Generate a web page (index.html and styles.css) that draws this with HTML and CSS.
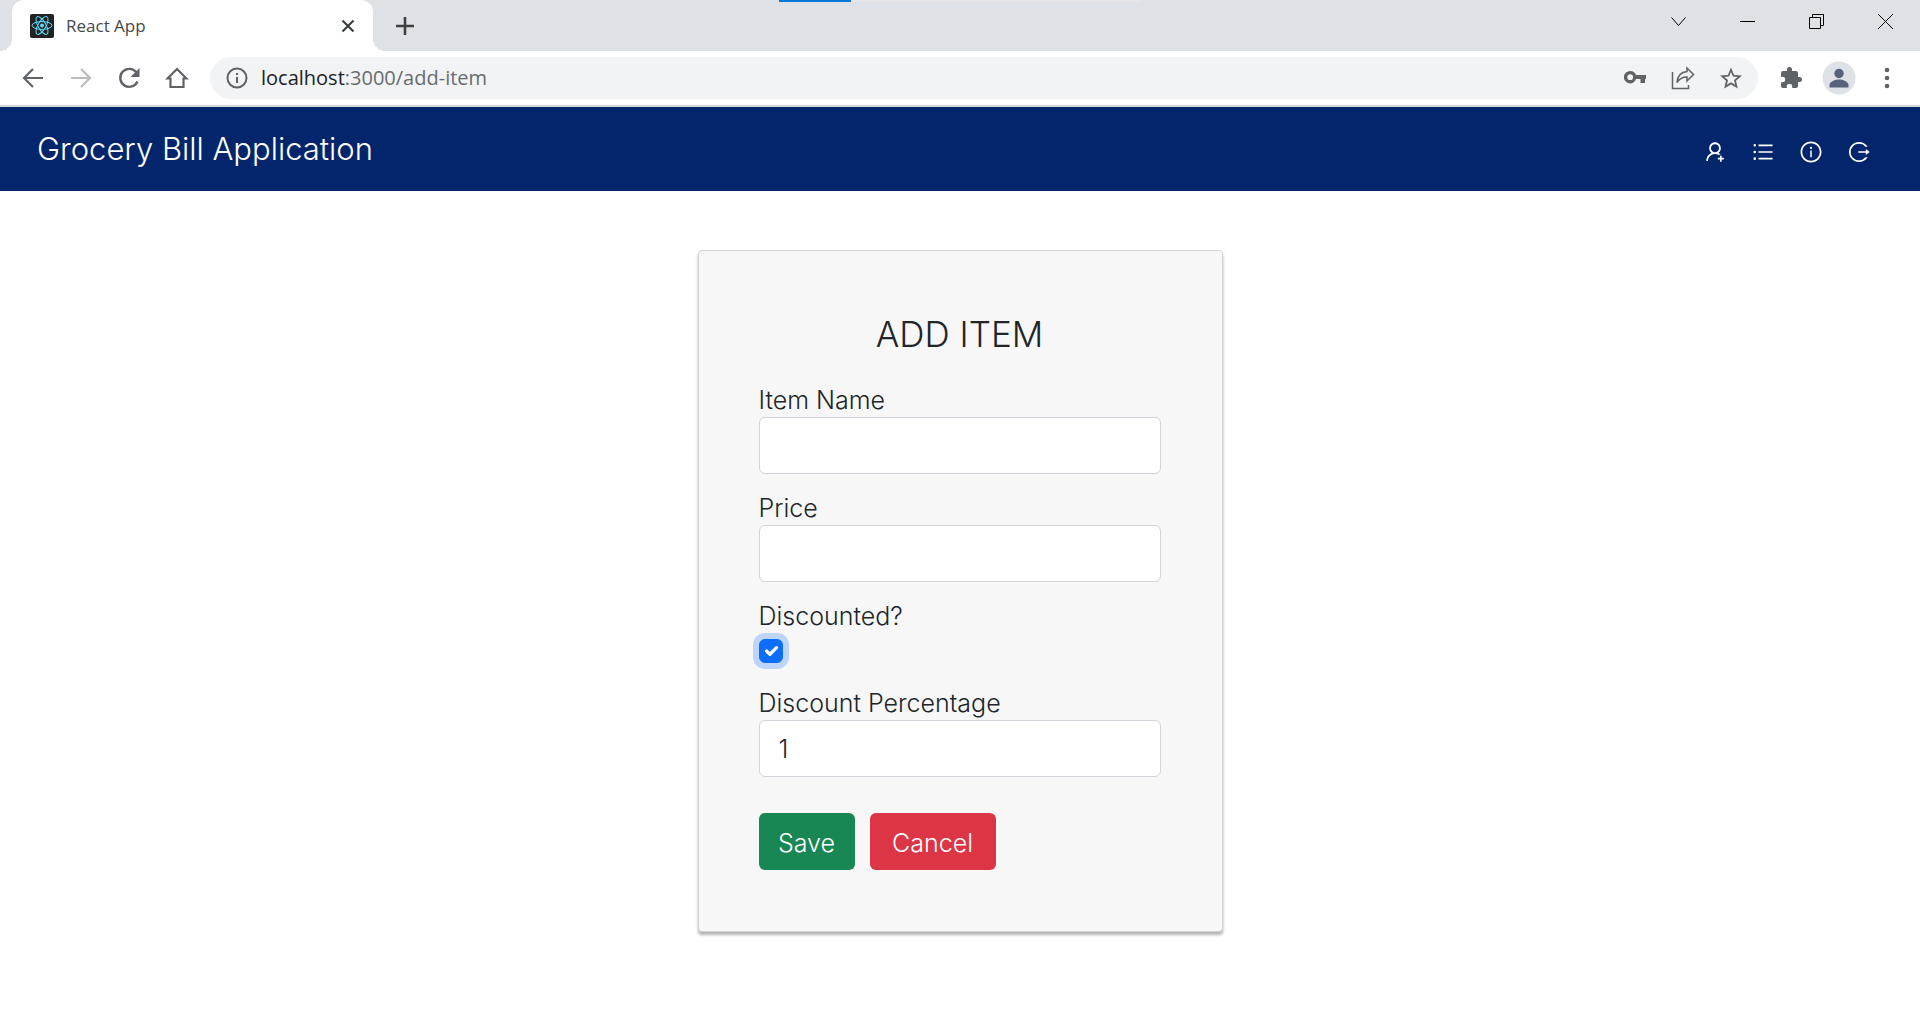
FILE: index.html
```html
<!DOCTYPE html>
<html lang="en">
<head>
<meta charset="utf-8">
<title>React App</title>
<meta name="viewport" content="width=device-width, initial-scale=1">
<link rel="stylesheet" href="styles.css">
</head>
<body>
<div class="browser">
  <div class="tabstrip">
    <div class="tab">
      <svg class="favicon" viewBox="0 0 24 24" aria-hidden="true">
        <rect width="24" height="24" rx="2" fill="#222"/>
        <g fill="none" stroke="#61dafb" stroke-width="1">
          <ellipse cx="12" cy="11.500" rx="10" ry="3.900"/>
          <ellipse cx="12" cy="11.500" rx="10" ry="3.900" transform="rotate(60 12 11.500)"/>
          <ellipse cx="12" cy="11.500" rx="10" ry="3.900" transform="rotate(120 12 11.500)"/>
        </g>
        <circle cx="12" cy="11.500" r="2" fill="#61dafb"/>
      </svg>
      <span class="tab-title">React App</span>
      <button class="tab-button" type="button" aria-label="Close tab">
        <svg width="24" height="24" viewBox="0 0 24 24"><path d="M6.500 6.500l11 11M17.500 6.500l-11 11" fill="none" stroke="#3c4043" stroke-width="2.200"/></svg>
      </button>
    </div>
    <button class="new-tab" type="button" aria-label="New tab">
      <svg width="24" height="24" viewBox="0 0 24 24"><path d="M12 3v18M3 12h18" fill="none" stroke="#3c4043" stroke-width="2.600"/></svg>
    </button>
    <div class="window-controls">
      <button type="button" aria-label="Search tabs"><svg width="17" height="17" viewBox="0 0 17 17"><path d="M1.500 4.500l7 8 7-8"/></svg></button>
      <button type="button" aria-label="Minimize"><svg width="17" height="17" viewBox="0 0 17 17"><path d="M1 8.500h15"/></svg></button>
      <button type="button" aria-label="Restore"><svg width="17" height="17" viewBox="0 0 17 17"><path d="M1.500 4.500h11v11h-11zM4.500 4.500v-3h11v11h-3"/></svg></button>
      <button type="button" aria-label="Close"><svg width="17" height="17" viewBox="0 0 17 17"><path d="M1 1l15 15M16 1L1 16"/></svg></button>
    </div>
    <div class="load-bar"><div class="load-bar-fill"></div></div>
  </div>

  <div class="toolbar">
    <button class="tool" type="button" aria-label="Back"><svg width="24" height="24" viewBox="0 0 24 24"><path d="M22 12H3M12 3l-9 9 9 9" fill="none" stroke="#5f6368" stroke-width="2.200"/></svg></button>
    <button class="tool" type="button" aria-label="Forward"><svg width="24" height="24" viewBox="0 0 24 24"><path d="M2 12h19M12 3l9 9-9 9" fill="none" stroke="#babcbe" stroke-width="2.200"/></svg></button>
    <button class="tool" type="button" aria-label="Reload"><svg width="24" height="24" viewBox="0 0 24 24"><path d="M20.500 15.500A9 9 0 1 1 19.300 6.200" fill="none" stroke="#5f6368" stroke-width="2.400"/><path d="M22.500 2v9h-9z" fill="#5f6368"/></svg></button>
    <button class="tool" type="button" aria-label="Home"><svg width="24" height="24" viewBox="0 0 24 24"><path d="M2.500 12.500L12 3l9.500 9.500H18.500V21h-13v-8.500z" fill="none" stroke="#5f6368" stroke-width="2.200"/></svg></button>
    <div class="omnibox">
      <button class="tool site-info" type="button" aria-label="Site information"><svg width="24" height="24" viewBox="0 0 24 24"><circle cx="12" cy="12" r="9.500" fill="none" stroke="#5f6368" stroke-width="2"/><path d="M11 11h2v6h-2zM11 7h2v2h-2z" fill="#5f6368"/></svg></button>
      <div class="url"><span class="url-host">localhost</span>:3000/add-item</div>
      <button class="tool" type="button" aria-label="Passwords"><svg width="24" height="24" viewBox="0 0 24 24"><path fill="#5f6368" fill-rule="evenodd" d="M7.200 5a6.200 6.200 0 0 1 5.800 4H23v4h-1v4h-4.500v-4H13A6.200 6.200 0 1 1 7.200 5zm0 3.300a2.900 2.900 0 1 0 0 5.800 2.900 2.900 0 0 0 0-5.800z"/></svg></button>
      <button class="tool" type="button" aria-label="Share"><svg width="24" height="24" viewBox="0 0 24 24"><path d="M1.500 6v16.500h16V19M16 2l6.500 6.500L16 15v-4c-4.500 0-7.500 1.500-10 5.500.5-6.500 4-10.500 10-11z" fill="none" stroke="#5f6368" stroke-width="1.500"/></svg></button>
      <button class="tool" type="button" aria-label="Bookmark"><svg width="24" height="24" viewBox="0 0 24 24"><path fill="#5f6368" d="M23 9.600l-7.900-.7L12 1.500 8.900 8.900 1 9.600l6 5.200L5.200 22.600 12 18.400l6.800 4.200-1.800-7.800zM12 16.300l-4.100 2.500L9 14.100l-3.700-3.200 4.800-.4L12 6l1.900 4.500 4.800.4-3.700 3.200 1.100 4.700z"/></svg></button>
    </div>
    <div class="toolbar-end">
      <button class="tool" type="button" aria-label="Extensions"><svg width="24" height="24" viewBox="0 0 24 24"><path fill="#5f6368" d="M20.500 11H19V7c0-1.100-.9-2-2-2h-4V3.500a2.500 2.500 0 0 0-5 0V5H4a2 2 0 0 0-2 2v3.800h1.500a2.700 2.700 0 0 1 0 5.400H2V20c0 1.100.9 2 2 2h3.800v-1.500a2.700 2.700 0 0 1 5.400 0V22H17a2 2 0 0 0 2-2v-4h1.500a2.500 2.500 0 0 0 0-5z"/></svg></button>
      <button class="tool" type="button" aria-label="Profile"><svg width="34" height="34" viewBox="0 0 34 34"><circle cx="17" cy="17" r="16.500" fill="#dee1e6"/><g fill="#56627a"><circle cx="17" cy="12.500" r="4.700"/><path d="M7.500 26.500v-2.500c0-3.500 6-5.500 9.500-5.500s9.500 2 9.500 5.500v2.500z"/></g></svg></button>
      <button class="tool" type="button" aria-label="Menu"><svg width="24" height="24" viewBox="0 0 24 24"><g fill="#5f6368"><circle cx="12" cy="4" r="2.300"/><circle cx="12" cy="12" r="2.300"/><circle cx="12" cy="20" r="2.300"/></g></svg></button>
    </div>
  </div>
</div>

<header class="app-header">
  <a class="brand" href="#">Grocery Bill Application</a>
  <nav class="app-nav">
    <a href="#" aria-label="Add customer"><svg width="24" height="24" viewBox="0 0 1024 1024"><path d="M678.300 642.400c24.200-13 51.900-20.400 81.400-20.400h.1c3 0 4.400-3.600 2.200-5.600a371.670 371.670 0 00-103.700-65.800c-.4-.2-.8-.3-1.200-.5C719.200 505 759.600 431.700 759.600 349c0-137-110.800-248-247.500-248S264.700 212 264.700 349c0 82.700 40.400 156 102.600 201.100-.4.2-.8.3-1.200.5-44.700 18.900-84.800 46-119.300 80.600a373.420 373.420 0 00-80.400 119.500A373.600 373.600 0 00137 888.800a8 8 0 008 8.200h59.900c4.300 0 7.900-3.500 8-7.800 2-77.200 32.900-149.500 87.600-204.300C357 628.200 432.200 597 512.200 597c56.700 0 111.100 15.700 158 45.100a8.100 8.100 0 008.100.3zM512.200 521c-45.800 0-88.900-17.900-121.400-50.400A171.200 171.200 0 01340.500 349c0-45.900 17.900-89.100 50.300-121.600S466.300 177 512.200 177s88.900 17.900 121.400 50.400A171.200 171.200 0 01683.900 349c0 45.900-17.900 89.100-50.300 121.600C601.100 503.100 558 521 512.200 521zM880 759h-84v-84c0-4.400-3.600-8-8-8h-56c-4.400 0-8 3.600-8 8v84h-84c-4.400 0-8 3.600-8 8v56c0 4.400 3.600 8 8 8h84v84c0 4.400 3.600 8 8 8h56c4.400 0 8-3.600 8-8v-84h84c4.400 0 8-3.600 8-8v-56c0-4.400-3.600-8-8-8z"/></svg></a>
    <a href="#" aria-label="Item list"><svg width="24" height="24" viewBox="0 0 1024 1024"><path d="M912 192H328c-4.400 0-8 3.600-8 8v56c0 4.400 3.600 8 8 8h584c4.400 0 8-3.600 8-8v-56c0-4.400-3.600-8-8-8zm0 284H328c-4.400 0-8 3.600-8 8v56c0 4.400 3.600 8 8 8h584c4.400 0 8-3.600 8-8v-56c0-4.400-3.600-8-8-8zm0 284H328c-4.400 0-8 3.600-8 8v56c0 4.400 3.600 8 8 8h584c4.400 0 8-3.600 8-8v-56c0-4.400-3.600-8-8-8zM104 228a56 56 0 10112 0 56 56 0 10-112 0zm0 284a56 56 0 10112 0 56 56 0 10-112 0zm0 284a56 56 0 10112 0 56 56 0 10-112 0z"/></svg></a>
    <a href="#" aria-label="About"><svg width="24" height="24" viewBox="0 0 1024 1024"><path d="M512 64C264.600 64 64 264.600 64 512s200.600 448 448 448 448-200.600 448-448S759.400 64 512 64zm0 820c-205.400 0-372-166.600-372-372s166.600-372 372-372 372 166.600 372 372-166.600 372-372 372z"/><path d="M464 336a48 48 0 1096 0 48 48 0 10-96 0zm72 112h-48c-4.400 0-8 3.600-8 8v272c0 4.400 3.600 8 8 8h48c4.400 0 8-3.600 8-8V456c0-4.400-3.600-8-8-8z"/></svg></a>
    <a href="#" aria-label="Log out"><svg width="24" height="24" viewBox="0 0 1024 1024"><path d="M868 732h-70.300c-4.800 0-9.300 2.100-12.300 5.800-7 8.500-14.500 16.700-22.400 24.500a353.840 353.840 0 01-112.700 75.900A352.800 352.800 0 01512.400 866c-47.900 0-94.300-9.400-137.900-27.800a353.840 353.840 0 01-112.700-75.900 353.280 353.280 0 01-76-112.500C167.300 606.200 158 559.900 158 512s9.400-94.200 27.800-137.800c17.800-42.100 43.400-80 76-112.500s70.500-58.100 112.700-75.900c43.600-18.400 90-27.800 137.900-27.800 47.900 0 94.300 9.300 137.900 27.800 42.200 17.800 80.100 43.400 112.700 75.900 7.900 7.900 15.300 16.100 22.400 24.500 3 3.700 7.600 5.800 12.300 5.800H868c6.300 0 10.200-7 6.700-12.300C798 160.500 663.800 81.600 511.300 82 271.700 82.600 79.600 277.100 82 516.400 84.400 751.900 276.200 942 512.400 942c152.100 0 285.700-78.800 362.300-197.700 3.400-5.300-.4-12.300-6.700-12.300zm88.900-226.300L815 393.700c-5.300-4.200-13-.4-13 6.300v76H488c-4.400 0-8 3.600-8 8v56c0 4.400 3.600 8 8 8h314v76c0 6.700 7.800 10.500 13 6.300l141.900-112a8 8 0 000-12.600z"/></svg></a>
  </nav>
</header>

<main class="page">
  <form class="card">
    <h1 class="card-title">ADD ITEM</h1>
    <div class="field">
      <label for="item-name">Item Name</label>
      <input class="control" id="item-name" type="text">
    </div>
    <div class="field">
      <label for="price">Price</label>
      <input class="control" id="price" type="text">
    </div>
    <div class="field">
      <label for="discounted">Discounted?</label>
      <div class="check-row"><input class="check is-focused" id="discounted" type="checkbox" checked></div>
    </div>
    <div class="field">
      <label for="percentage">Discount Percentage</label>
      <input class="control" id="percentage" type="text" value="1">
    </div>
    <div class="actions">
      <button class="btn btn-save" type="button">Save</button>
      <button class="btn btn-cancel" type="button">Cancel</button>
    </div>
  </form>
</main>
</body>
</html>
```

FILE: styles.css
```css
* {
  box-sizing: border-box;
}

body {
  margin: 0;
  background: #fff;
  color: #212529;
  font-family: "Century Gothic", Inter, sans-serif;
  font-size: 25px;
  font-weight: 300;
  line-height: 36px;
}

button {
  font: inherit;
  border: 0;
  padding: 0;
  background: none;
}

svg {
  display: block;
}

/* Browser frame */
.browser {
  font-family: "Segoe UI", "Open Sans", sans-serif;
  font-weight: 400;
  border-bottom: 2px solid #d9d9d9;
}

.tabstrip {
  position: relative;
  display: flex;
  height: 51px;
  padding-left: 12px;
  background: #dee1e6;
}

.tab {
  position: relative;
  display: flex;
  align-items: center;
  width: 361px;
  padding: 0 13px 0 18px;
  border-radius: 12px 12px 0 0;
  background: #fff;
}

.tab::before,
.tab::after {
  content: "";
  position: absolute;
  bottom: 0;
  width: 12px;
  height: 12px;
}

.tab::before {
  right: 100%;
  background: radial-gradient(circle at 0 0, transparent 12px, #fff 12px);
}

.tab::after {
  left: 100%;
  background: radial-gradient(circle at 100% 0, transparent 12px, #fff 12px);
}

.favicon {
  width: 24px;
  height: 24px;
}

.tab-title {
  flex: 1;
  padding-left: 12px;
  color: #45484d;
  font-size: 17px;
}

.new-tab {
  padding: 0 20px;
}

.window-controls {
  display: flex;
  height: 43px;
  margin-left: auto;
}

.window-controls button {
  display: grid;
  place-items: center;
  width: 69px;
}

.window-controls svg {
  fill: none;
  stroke: #000;
  stroke-width: 1;
}

.load-bar {
  position: absolute;
  top: 0;
  left: calc(50% - 181px);
  width: 362px;
  height: 2px;
  background: #e5e5e7;
}

.load-bar-fill {
  width: 20%;
  height: 100%;
  background: #0078d7;
}

.toolbar {
  display: flex;
  align-items: center;
  height: 54px;
  padding: 0 9px;
}

.tool {
  display: grid;
  place-items: center;
  width: 48px;
  height: 42px;
}

.omnibox {
  display: flex;
  flex: 1;
  align-items: center;
  height: 42px;
  margin: 0 9px;
  padding-right: 3px;
  border-radius: 21px;
  background: #f1f3f4;
}

.site-info {
  padding-left: 6px;
}

.url {
  flex: 1;
  padding-left: 3px;
  color: #696c70;
  font-size: 20px;
}

.url-host {
  color: #202124;
}

.toolbar-end {
  display: flex;
}

/* Application header */
.app-header {
  display: flex;
  align-items: center;
  justify-content: space-between;
  min-height: 84px;
  padding: 0 49px 0 37px;
  background: #02256b;
}

.brand {
  color: #fff;
  font-size: 31px;
  text-decoration: none;
}

.app-nav {
  display: flex;
  gap: 24px;
  padding-top: 6px;
}

.app-nav svg {
  fill: #fff;
}

/* Item form */
.page {
  display: flex;
  justify-content: center;
  padding: 59px 24px 48px;
}

.card {
  width: 525px;
  padding: 60px 61px 61px 60px;
  border: 1px solid #d3d3d3;
  border-radius: 4px;
  background: #f7f7f7;
  box-shadow: 0 3px 3px rgba(0, 0, 0, 0.3);
}

.card-title {
  margin: 0;
  padding: 2px 0 26px;
  font-size: 35px;
  font-weight: 300;
  line-height: 42px;
  text-align: center;
}

.field {
  margin-bottom: 15px;
}

.field label {
  display: block;
  padding-top: 2px;
  line-height: 34px;
}

.control {
  display: block;
  width: 100%;
  height: 57px;
  padding: 9px 19px;
  border: 1px solid #ced4da;
  border-radius: 6px;
  background: #fff;
  color: inherit;
  font: inherit;
}

.check-row {
  height: 36px;
  padding-top: 6px;
}

.check {
  display: block;
  width: 24px;
  height: 24px;
  margin: 0;
  appearance: none;
  border: 1px solid #bfbfbf;
  border-radius: 6px;
  background: #fff;
}

.check:checked {
  border-color: #0d6efd;
  background: #0d6efd url("data:image/svg+xml,%3csvg xmlns='http://www.w3.org/2000/svg' viewBox='0 0 20 20'%3e%3cpath fill='none' stroke='%23fff' stroke-linecap='round' stroke-linejoin='round' stroke-width='3' d='M6 10l3 3l6-6'/%3e%3c/svg%3e") center / contain no-repeat;
}

.check:focus,
.check.is-focused {
  outline: 0;
  box-shadow: 0 0 0 6px rgba(13, 110, 253, 0.25);
}

.actions {
  display: flex;
  gap: 15px;
  padding-top: 21px;
}

.btn {
  min-width: 96px;
  height: 57px;
  padding: 2px 19px 0;
  border-radius: 6px;
  color: #fff;
}

.btn-save {
  background: #198754;
}

.btn-cancel {
  min-width: 126px;
  background: #dc3545;
}
```
